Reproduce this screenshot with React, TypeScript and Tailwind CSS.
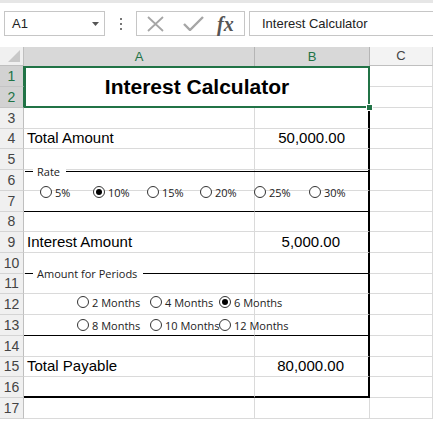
import React from "react";

const ui = "font-['Liberation_Sans',Arial,sans-serif]";
const ctl = "font-['Open_Sans','Noto_Sans',sans-serif]";

type RadioProps = { x: number; y: number; label: string; checked?: boolean };

// form controls float over the sheet, so they sit at their own coordinates
function Radio({ x, y, label, checked }: RadioProps) {
  return (
    <div
      className={`absolute flex h-4 items-center gap-[3px] text-[11px] leading-none text-[#222] ${ctl}`}
      style={{ left: x, top: y - 8 }}
    >
      <span className="flex h-3 w-3 items-center justify-center rounded-full border border-[#333] bg-white">
        {checked && <span className="h-[6px] w-[6px] rounded-full bg-black" />}
      </span>
      <span className="whitespace-nowrap">{label}</span>
    </div>
  );
}

function GroupBox({ y, label, labelWidth }: { y: number; label: string; labelWidth: number }) {
  return (
    <>
      <div className="absolute left-[25px] h-px w-[344px] bg-black" style={{ top: y }} />
      <div
        className={`absolute flex h-[14px] items-center bg-white pl-[4px] text-[11px] leading-none text-[#222] ${ctl}`}
        style={{ left: 33, top: y - 7, width: labelWidth }}
      >
        {label}
      </div>
    </>
  );
}

const rowHead =
  "flex items-center justify-center border-b border-r border-b-[#d4d4d4] border-r-[#bfbfbf] bg-[#f0f0f0] text-[14px] text-[#444]";

function cellA(r: number) {
  if (r === 7 || r === 13) return "border-b border-b-black border-r border-r-[#dadada]";
  if (r === 16) return "border-b-2 border-b-black border-r border-r-[#dadada]";
  return "border-b border-b-[#dadada] border-r border-r-[#dadada]";
}

function cellB(r: number) {
  if (r === 7 || r === 13) return "border-b border-b-black border-r-2 border-r-black";
  if (r === 16) return "border-b-2 border-b-black border-r-2 border-r-black";
  if (r === 17) return "border-b border-b-[#dadada] border-r border-r-[#dadada]";
  return "border-b border-b-[#dadada] border-r-2 border-r-black";
}

const labels: Record<number, string> = {
  4: "Total Amount",
  9: "Interest Amount",
  15: "Total Payable",
};

const values: Record<number, { text: string; pad: string }> = {
  4: { text: "50,000.00", pad: "pr-[23px]" },
  9: { text: "5,000.00", pad: "pr-[28px]" },
  15: { text: "80,000.00", pad: "pr-[24px]" },
};

export default function App() {
  const rows = Array.from({ length: 15 }, (_, i) => i + 3);

  return (
    <div className={`relative h-[422px] w-[433px] overflow-hidden bg-white ${ui}`}>
      {/* formula bar */}
      <div className="h-[3px] bg-[#e6e6e6]" />
      <div className="flex h-[44px] items-start pt-[8px]">
        <div className="ml-[4px] flex h-[25px] w-[101px] items-center justify-between border border-[#c6c6c6] pl-[7px] pr-[5px] text-[13px] text-[#222]">
          <span>A1</span>
          <svg width="7" height="4" viewBox="0 0 7 4">
            <path d="M0 0h7L3.5 4z" fill="#555" />
          </svg>
        </div>
        <div className="ml-[14px] flex h-[25px] w-[4px] flex-col items-center justify-center gap-[3px]">
          <span className="h-[2px] w-[2px] bg-[#777]" />
          <span className="h-[2px] w-[2px] bg-[#777]" />
          <span className="h-[2px] w-[2px] bg-[#777]" />
        </div>
        <div className="ml-[13px] flex h-[25px] w-[109px] items-center border border-[#c6c6c6]">
          <svg className="ml-[10px]" width="17" height="16" viewBox="0 0 17 16">
            <path d="M1 1l15 14M16 1L1 15" stroke="#a6a6a6" strokeWidth="1.8" fill="none" />
          </svg>
          <svg className="ml-[19px]" width="21" height="15" viewBox="0 0 21 15">
            <path d="M1 8l6 6L20 1" stroke="#a6a6a6" strokeWidth="2.4" fill="none" />
          </svg>
          <span className="ml-[13px] font-['Liberation_Serif',serif] text-[20px] font-bold italic leading-none text-[#555]">
            fx
          </span>
        </div>
        <div className="ml-[4px] flex h-[25px] flex-1 items-center border border-r-0 border-[#c6c6c6] pl-[12px] text-[13px] text-[#222]">
          Interest Calculator
        </div>
      </div>

      {/* sheet */}
      <div className="grid grid-cols-[24px_231px_115px_63px] grid-rows-[19px_21px_21px_21px_20px_21px_21px_21px_20px_21px_21px_20px_21px_21px_21px_20px_21px_21px] text-[15px] text-black">
        <div className="relative border-b border-r border-b-[#bfbfbf] border-r-[#bfbfbf] bg-[#f0f0f0]">
          <svg className="absolute bottom-[3px] right-[3px]" width="12" height="12" viewBox="0 0 12 12">
            <path d="M12 0v12H0z" fill="#c8c8c8" />
          </svg>
        </div>
        <div className="flex items-center justify-center border-r border-r-[#b5b5b5] bg-[#d8d8d8] text-[13px] text-[#217346]">
          A
        </div>
        <div className="flex items-center justify-center border-r border-r-[#b5b5b5] bg-[#d8d8d8] text-[13px] text-[#217346]">
          B
        </div>
        <div className="flex items-center justify-center border-b border-r border-b-[#bfbfbf] border-r-[#d4d4d4] bg-[#f3f3f3] text-[13px] text-[#444]">
          C
        </div>

        {/* rows 1-2, merged title */}
        <div className="flex items-center justify-center border-b border-r border-b-[#c4c4c4] border-r-[#217346] bg-[#d2d2d2] text-[14px] text-[#217346]">
          1
        </div>
        <div className="col-span-2 row-span-2 flex items-center justify-center border-2 border-[#217346] text-[21px] font-bold">
          Interest Calculator
        </div>
        <div className="border-b border-r border-[#dadada]" />
        <div className="flex items-center justify-center border-b border-r border-b-[#c4c4c4] border-r-[#217346] bg-[#d2d2d2] text-[14px] text-[#217346]">
          2
        </div>
        <div className="border-b border-r border-[#dadada]" />

        {rows.map((r) => (
          <React.Fragment key={r}>
            <div className={rowHead}>{r}</div>
            <div className={`flex items-center whitespace-nowrap pl-[3px] ${cellA(r)}`}>{labels[r]}</div>
            <div className={`flex items-center justify-end ${values[r]?.pad ?? ""} ${cellB(r)}`}>
              {values[r]?.text}
            </div>
            <div className="border-b border-r border-[#dadada]" />
          </React.Fragment>
        ))}
      </div>

      {/* fill handle */}
      <div className="absolute left-[366px] top-[104px] h-[7px] w-[7px] border border-white bg-[#217346]" />

      {/* Rate group */}
      <GroupBox y={171} label="Rate" labelWidth={33} />
      <Radio x={40} y={192} label="5%" />
      <Radio x={93} y={192} label="10%" checked />
      <Radio x={147} y={192} label="15%" />
      <Radio x={200} y={192} label="20%" />
      <Radio x={254} y={192} label="25%" />
      <Radio x={309} y={192} label="30%" />

      {/* Amount for Periods group */}
      <GroupBox y={273} label="Amount for Periods" labelWidth={110} />
      <Radio x={77} y={302} label="2 Months" />
      <Radio x={150} y={302} label="4 Months" />
      <Radio x={219} y={302} label="6 Months" checked />
      <Radio x={77} y={325} label="8 Months" />
      <Radio x={150} y={325} label="10 Months" />
      <Radio x={219} y={325} label="12 Months" />
    </div>
  );
}
